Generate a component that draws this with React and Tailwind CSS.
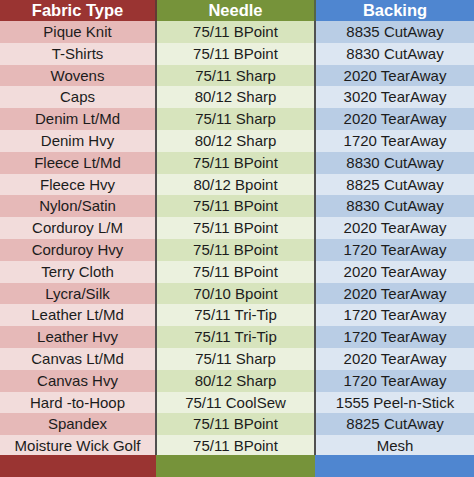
import React from "react";

const rows = [
  ["Pique Knit", "75/11 BPoint", "8835 CutAway"],
  ["T-Shirts", "75/11 BPoint", "8830 CutAway"],
  ["Wovens", "75/11 Sharp", "2020 TearAway"],
  ["Caps", "80/12 Sharp", "3020 TearAway"],
  ["Denim Lt/Md", "75/11 Sharp", "2020 TearAway"],
  ["Denim Hvy", "80/12 Sharp", "1720 TearAway"],
  ["Fleece Lt/Md", "75/11 BPoint", "8830 CutAway"],
  ["Fleece Hvy", "80/12 Bpoint", "8825 CutAway"],
  ["Nylon/Satin", "75/11 BPoint", "8830 CutAway"],
  ["Corduroy L/M", "75/11 BPoint", "2020 TearAway"],
  ["Corduroy Hvy", "75/11 BPoint", "1720 TearAway"],
  ["Terry Cloth", "75/11 BPoint", "2020 TearAway"],
  ["Lycra/Silk", "70/10 Bpoint", "2020 TearAway"],
  ["Leather Lt/Md", "75/11 Tri-Tip", "1720 TearAway"],
  ["Leather Hvy", "75/11 Tri-Tip", "1720 TearAway"],
  ["Canvas Lt/Md", "75/11 Sharp", "2020 TearAway"],
  ["Canvas Hvy", "80/12 Sharp", "1720 TearAway"],
  ["Hard -to-Hoop", "75/11 CoolSew", "1555 Peel-n-Stick"],
  ["Spandex", "75/11 BPoint", "8825 CutAway"],
  ["Moisture Wick Golf", "75/11 BPoint", "Mesh"],
];

export default function App() {
  return (
    <div
      className="w-[474px] h-[477px] overflow-hidden bg-white text-[#1c1c1c] flex flex-col"
      style={{ fontFamily: '"Liberation Sans", Arial, sans-serif' }}
    >
      <div className="grid grid-cols-[155px_2px_157px_2px_158px] h-[21px] text-white font-bold text-[16.5px] leading-[21px] shrink-0">
        <div className="bg-[#9a3432] text-center">Fabric Type</div>
        <div className="bg-[#623a34]" />
        <div className="bg-[#76933a] text-center">Needle</div>
        <div className="bg-[#556645]" />
        <div className="bg-[#4f86d0] text-center">Backing</div>
      </div>
      <div className="flex flex-col gap-y-[2px] bg-[#505050] shrink-0">
        {rows.map((r, i) => {
          const dark = i % 2 === 0;
          return (
            <div
              key={i}
              className="grid grid-cols-[155px_157px_158px] gap-x-[2px] h-[19.8px] text-[15px]"
            >
              <div
                className={`flex items-center justify-center ${
                  dark ? "bg-[#e6b9b8]" : "bg-[#f2dcdb]"
                }`}
              >
                {r[0]}
              </div>
              <div
                className={`flex items-center justify-center ${
                  dark ? "bg-[#d7e4bd]" : "bg-[#ebf1de]"
                }`}
              >
                {r[1]}
              </div>
              <div
                className={`flex items-center justify-center ${
                  dark ? "bg-[#b9cde5]" : "bg-[#dce6f2]"
                }`}
              >
                {r[2]}
              </div>
            </div>
          );
        })}
      </div>
      <div className="grid grid-cols-[156px_159px_159px] flex-1">
        <div className="bg-[#9a3432]" />
        <div className="bg-[#76933a]" />
        <div className="bg-[#4f86d0]" />
      </div>
    </div>
  );
}
